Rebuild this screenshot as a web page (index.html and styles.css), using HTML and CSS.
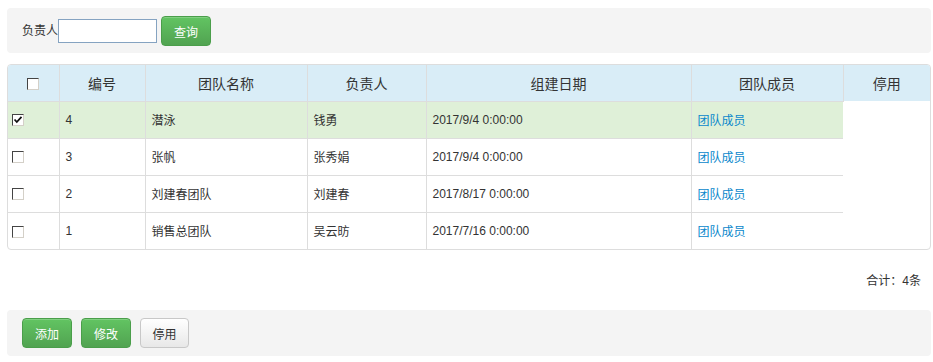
FILE: index.html
```html
<!DOCTYPE html>
<html lang="zh-CN">
  <head>
    <meta charset="UTF-8" />
    <title>团队管理</title>
    <link rel="stylesheet" href="styles.css">
  </head>
  <body>
    <div class="page">
      <!-- 查询条件 -->
      <form class="panel panel--search">
        <label class="search__label" for="leader">负责人</label>
        <input class="search__input" id="leader" type="text" />
        <button class="btn btn--green" type="button">查询</button>
      </form>

      <!-- 团队列表 -->
      <div class="grid">
        <table class="grid__table">
          <colgroup>
            <col style="width: 51px" />
            <col style="width: 86px" />
            <col style="width: 162px" />
            <col style="width: 119px" />
            <col style="width: 265px" />
            <col style="width: 152px" />
            <col />
          </colgroup>
          <thead>
            <tr>
              <th><span class="check"></span></th>
              <th>编号</th>
              <th>团队名称</th>
              <th>负责人</th>
              <th>组建日期</th>
              <th>团队成员</th>
              <th>停用</th>
            </tr>
          </thead>
          <tbody>
            <tr class="is-selected">
              <td class="cell-check">
                <span class="check check--on">
                  <svg viewBox="0 0 10 10" width="10" height="10">
                    <polyline points="1.5,4.5 3.8,7 8.5,1.8" fill="none" stroke="#111" stroke-width="1.8" />
                  </svg>
                </span>
              </td>
              <td>4</td>
              <td>潜泳</td>
              <td>钱勇</td>
              <td>2017/9/4 0:00:00</td>
              <td><a class="grid__link" href="#">团队成员</a></td>
            </tr>
            <tr>
              <td class="cell-check"><span class="check"></span></td>
              <td>3</td>
              <td>张帆</td>
              <td>张秀娟</td>
              <td>2017/9/4 0:00:00</td>
              <td><a class="grid__link" href="#">团队成员</a></td>
            </tr>
            <tr>
              <td class="cell-check"><span class="check"></span></td>
              <td>2</td>
              <td>刘建春团队</td>
              <td>刘建春</td>
              <td>2017/8/17 0:00:00</td>
              <td><a class="grid__link" href="#">团队成员</a></td>
            </tr>
            <tr>
              <td class="cell-check"><span class="check"></span></td>
              <td>1</td>
              <td>销售总团队</td>
              <td>吴云昉</td>
              <td>2017/7/16 0:00:00</td>
              <td><a class="grid__link" href="#">团队成员</a></td>
            </tr>
          </tbody>
        </table>
      </div>

      <p class="summary">合计：4条</p>

      <!-- 操作按钮 -->
      <div class="panel panel--actions">
        <button class="btn btn--green" type="button">添加</button>
        <button class="btn btn--green" type="button">修改</button>
        <button class="btn btn--white" type="button">停用</button>
      </div>
    </div>
  </body>
</html>
```

FILE: styles.css
```css
* {
  margin: 0;
  padding: 0;
  box-sizing: border-box;
}

body {
  color: #333;
  background-color: #fff;
  font-family: "Liberation Sans", "Noto Sans CJK SC", sans-serif;
  font-size: 12px;
}

.page {
  padding: 8px 2px 0 7px;
}

.panel {
  display: flex;
  align-items: center;
  background-color: #f4f4f4;
  border-radius: 4px;
}
.panel--search {
  height: 45px;
  padding: 1px 15px 0;
}
.panel--actions {
  height: 46px;
  padding: 0 15px;
  gap: 9px;
}

.search__label {
  line-height: 24px;
}
.search__input {
  width: 99px;
  height: 24px;
  border: 1px solid #85a3c1;
  background-color: #fff;
  margin-right: 4px;
  font: inherit;
}

.btn {
  width: 50px;
  height: 30px;
  border-radius: 4px;
  font-family: inherit;
  font-size: 12px;
  cursor: pointer;
}
.btn--green {
  color: #fff;
  border: 1px solid #4a9e4a;
  background: linear-gradient(#62c462, #51a351);
  box-shadow: inset 0 1px 0 rgba(255, 255, 255, 0.2);
}
.btn--white {
  width: 49px;
  color: #333;
  border: 1px solid #c8c8c8;
  background: linear-gradient(#fff, #e8e8e8);
}

.grid {
  margin-top: 11px;
  border: 1px solid #ddd;
  border-radius: 4px;
  overflow: hidden;
}
.grid__table {
  width: 100%;
  table-layout: fixed;
  border-collapse: collapse;
}
.grid__table th {
  height: 36px;
  font-size: 14px;
  font-weight: 400;
  text-align: center;
  background-color: #d9edf7;
  border-right: 1px solid #ddd;
}
.grid__table th:last-child {
  border-right: 0;
}
.grid__table td {
  height: 37px;
  padding: 0 6px;
  border-top: 1px solid #ddd;
  border-right: 1px solid #ddd;
}
.grid__table td:last-child {
  border-right: 0;
}
.grid__table tr.is-selected td {
  background-color: #dff0d8;
}
.grid__table td.cell-check {
  padding-left: 4px;
}
.grid__link {
  color: #0a88cc;
  text-decoration: none;
}

.check {
  display: inline-block;
  width: 12px;
  height: 12px;
  vertical-align: middle;
  background-color: #fff;
  border: 1px solid;
  border-color: #444 #d4d0c8 #d4d0c8 #444;
  position: relative;
}
.check svg {
  position: absolute;
  left: 0;
  top: 0;
}

.summary {
  padding: 24px 10px 22px 0;
  line-height: 14px;
  text-align: right;
}
```
